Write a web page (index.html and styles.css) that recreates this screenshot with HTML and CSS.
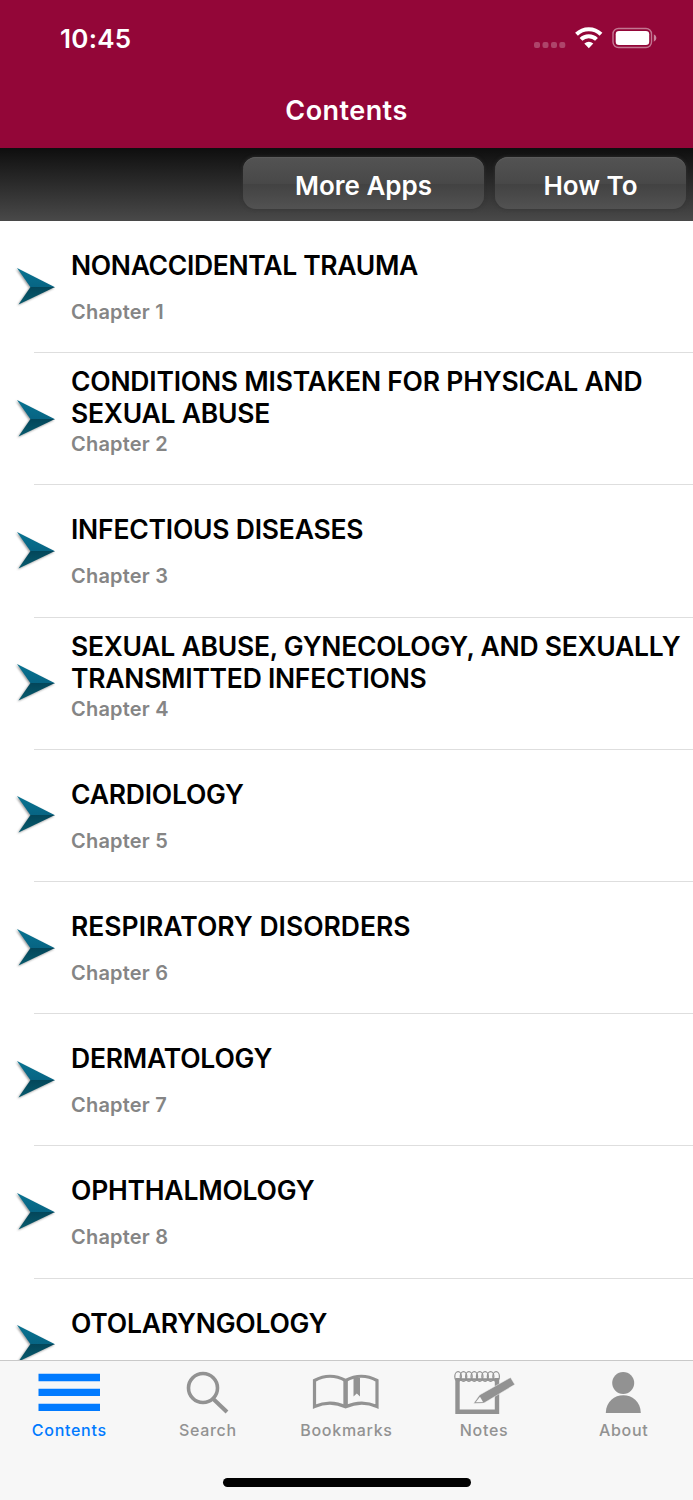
FILE: index.html
```html
<!DOCTYPE html>
<html lang="en">
<head>
<meta charset="utf-8">
<title>Contents</title>
<link rel="stylesheet" href="styles.css">
</head>
<body>
<svg class="defs" width="0" height="0" aria-hidden="true">
  <defs>
    <linearGradient id="top" x1="0" y1="0" x2="0" y2="1"><stop offset="0" stop-color="#087391"/><stop offset="1" stop-color="#076483"/></linearGradient>
    <linearGradient id="bottom" x1="0" y1="0" x2="0" y2="1"><stop offset="0" stop-color="#03465a"/><stop offset="1" stop-color="#075b6e"/></linearGradient>
    <symbol id="arrow" viewBox="0 0 42 42">
      <path fill="url(#top)" d="M2 2 40 21.300H15.500Z"/>
      <path fill="url(#bottom)" d="M15.500 21H40L3.500 38.500Z"/>
    </symbol>
  </defs>
</svg>
<div class="app">
  <header class="header">
    <div class="status">
      <span class="clock">10:45</span>
      <svg class="indicators" width="124" height="24" viewBox="0 0 124 24">
        <g fill="#fff" fill-opacity=".25"><rect x="1" y="15" width="6" height="6" rx="2"/><rect x="9.500" y="15" width="6" height="6" rx="2"/><rect x="18" y="15" width="6" height="6" rx="2"/><rect x="26.300" y="15" width="6" height="6" rx="2"/></g>
        <path d="M43.500 7.200a17.500 17.500 0 0 1 24.500 0M48 12.400a11 11 0 0 1 15.500 0" fill="none" stroke="#fff" stroke-width="4"/>
        <path d="M51.300 16.600q4.500-3.500 9 0L55.800 21.200Z" fill="#fff"/>
        <rect x="80" y="1.500" width="38.500" height="19" rx="5.500" fill="none" stroke="#fff" stroke-opacity=".45" stroke-width="1.400"/>
        <rect x="82.700" y="4" width="33.500" height="14" rx="3.300" fill="#fff"/>
        <path d="M120.800 7.300q2.600 1.200 2.600 3.700t-2.600 3.700Z" fill="#fff" fill-opacity=".5"/>
      </svg>
    </div>
    <h1 class="title">Contents</h1>
  </header>
  <nav class="toolbar">
    <button class="tool more">More Apps</button>
    <button class="tool how">How To</button>
  </nav>
  <main class="list">
    <article class="row"><svg class="arrow"><use href="#arrow"/></svg><div class="text"><h2 class="name tight">NONACCIDENTAL TRAUMA</h2><p class="chapter">Chapter 1</p></div></article>
    <article class="row"><svg class="arrow"><use href="#arrow"/></svg><div class="text"><h2 class="name">CONDITIONS MISTAKEN FOR PHYSICAL AND<br>SEXUAL ABUSE</h2><p class="chapter">Chapter 2</p></div></article>
    <article class="row"><svg class="arrow"><use href="#arrow"/></svg><div class="text"><h2 class="name">INFECTIOUS DISEASES</h2><p class="chapter">Chapter 3</p></div></article>
    <article class="row"><svg class="arrow"><use href="#arrow"/></svg><div class="text"><h2 class="name snug">SEXUAL ABUSE, GYNECOLOGY, AND SEXUALLY<br>TRANSMITTED INFECTIONS</h2><p class="chapter">Chapter 4</p></div></article>
    <article class="row"><svg class="arrow"><use href="#arrow"/></svg><div class="text"><h2 class="name">CARDIOLOGY</h2><p class="chapter">Chapter 5</p></div></article>
    <article class="row"><svg class="arrow"><use href="#arrow"/></svg><div class="text"><h2 class="name wide">RESPIRATORY DISORDERS</h2><p class="chapter">Chapter 6</p></div></article>
    <article class="row"><svg class="arrow"><use href="#arrow"/></svg><div class="text"><h2 class="name">DERMATOLOGY</h2><p class="chapter">Chapter 7</p></div></article>
    <article class="row"><svg class="arrow"><use href="#arrow"/></svg><div class="text"><h2 class="name">OPHTHALMOLOGY</h2><p class="chapter">Chapter 8</p></div></article>
    <article class="row"><svg class="arrow"><use href="#arrow"/></svg><div class="text"><h2 class="name">OTOLARYNGOLOGY</h2></div></article>
  </main>
  <footer class="footer">
    <nav class="tabs">
      <a class="tab active"><svg width="72" height="50" viewBox="0 0 72 50"><path fill="currentColor" d="M5.500 12.700h61.500v7.500h-61.500zM5.500 27.700h61.500v7.300h-61.500zM5.500 42.700h61.500v7.300h-61.500z"/></svg><span>Contents</span></a>
      <a class="tab"><svg width="72" height="50" viewBox="0 0 72 50"><g fill="none" stroke="currentColor"><circle cx="31" cy="27" r="14.500" stroke-width="3.600"/><path d="M41.300 38 55 51" stroke-width="4"/></g></svg><span>Search</span></a>
      <a class="tab"><svg width="72" height="50" viewBox="0 0 72 50"><path d="M4.500 19.500Q20 11 35.600 19.500 51.300 11 67 19.500V45.500Q51.500 38.500 35.600 45.800 20.500 38.500 4.500 45.500Z" fill="none" stroke="currentColor" stroke-width="3.200"/><path d="M35.600 19v27" stroke="currentColor" stroke-width="4.500"/><path d="M43.500 17h6.500v18.500L46.800 32.500 43.500 35.500Z" fill="currentColor"/></svg><span>Bookmarks</span></a>
      <a class="tab"><svg width="72" height="50" viewBox="0 0 72 50"><path d="M8.500 17V50.800H48V17" fill="none" stroke="currentColor" stroke-width="4.400"/><path d="M7 18.500H49.500" stroke="currentColor" stroke-width="2.500"/><g fill="none" stroke="currentColor" stroke-width="1.200"><ellipse cx="9.100" cy="15.500" rx="3.300" ry="4.800"/><ellipse cx="14.500" cy="15.500" rx="3.300" ry="4.800"/><ellipse cx="19.900" cy="15.500" rx="3.300" ry="4.800"/><ellipse cx="25.300" cy="15.500" rx="3.300" ry="4.800"/><ellipse cx="30.700" cy="15.500" rx="3.300" ry="4.800"/><ellipse cx="36.100" cy="15.500" rx="3.300" ry="4.800"/><ellipse cx="41.600" cy="15.500" rx="3.300" ry="4.800"/><ellipse cx="47.100" cy="15.500" rx="3.300" ry="4.800"/></g><path d="M24.500 42.500 30.500 34 61.500 16.500 65.800 23.500 35 42Z" fill="currentColor" stroke="#f7f7f7" stroke-width=".5"/><path d="M26.700 41.300 31 35.800 34 41Z" fill="#f7f7f7"/></svg><span class="notes">Notes</span></a>
      <a class="tab"><svg width="72" height="50" viewBox="0 0 72 50"><circle cx="35.200" cy="22" r="11" fill="currentColor"/><path d="M17.800 52C18.300 28.300 52.300 28.300 52.800 52Z" fill="currentColor"/></svg><span>About</span></a>
    </nav>
    <div class="home"></div>
  </footer>
</div>
</body>
</html>
```
FILE: styles.css
```css
* { box-sizing: border-box; }
body { margin: 0; background: #fff; font-family: Inter, "Liberation Sans", sans-serif; }
h1, h2, p { margin: 0; }
svg { display: block; overflow: visible; flex: none; }
.defs { position: absolute; }
.app { width: 693px; height: 1500px; display: flex; flex-direction: column; overflow: hidden; }
.header { height: 148px; flex: none; background: #930638; color: #fff; }
.status { height: 76px; padding: 1px 36px 0 60px; display: flex; justify-content: space-between; align-items: center; }
.clock { font-size: 26px; font-weight: 600; letter-spacing: .25px; }
.title { font-size: 27px; font-weight: 600; line-height: 70px; letter-spacing: .45px; text-align: center; }
.toolbar { height: 73px; flex: none; display: flex; justify-content: flex-end; gap: 11px; padding: 9px 7px 12px; background: linear-gradient(#0e0e0e, #1a1a1a 20%, #494949); }
.tool { height: 52px; border: 0; border-radius: 13px; padding: 0; color: #fff; font: 600 26px/56px Inter, sans-serif; background: linear-gradient(#535353, #484848 52%, #424242 52%, #525252); box-shadow: 0 0 3px 1px #3338, inset 0 1px #5b5b5b; }
.more { width: 241px; padding-top: 1px; }
.how { width: 191px; padding-top: 1px; }
.list { height: 1139px; flex: none; overflow: hidden; }
.row { height: 132.200px; display: flex; padding-left: 15px; background: linear-gradient(#dedede, #dedede) 34px 100% / 100% 1px no-repeat; }
.arrow { width: 42px; height: 42px; margin: 44.600px 14px 0 0; filter: drop-shadow(-1px 1px 1px #0006); }
.text { padding-top: 12px; white-space: nowrap; }
.name { height: 64px; display: grid; align-content: center; font-size: 26.500px; line-height: 32px; font-weight: 600; letter-spacing: -.22px; color: #000; }
.tight { letter-spacing: -.32px; }
.snug { letter-spacing: -.26px; }
.wide { letter-spacing: 0; }
.chapter { font-size: 20px; line-height: 30px; font-weight: 600; letter-spacing: .2px; color: #858585; }
.footer { height: 140px; flex: none; background: #f7f7f7; border-top: 1px solid #c9c9c9; }
.tabs { display: grid; grid-template-columns: repeat(5, 1fr); height: 84px; }
.tab { display: flex; flex-direction: column; align-items: center; color: #929292; font-size: 16px; line-height: 20px; font-weight: 500; letter-spacing: .7px; }
.tab span { margin-top: 9px; }
.tab .notes { margin-right: 2px; }
.active { color: #007aff; }
.home { width: 248px; height: 9px; border-radius: 5px; margin: 33px auto 0; background: #000; }
```
